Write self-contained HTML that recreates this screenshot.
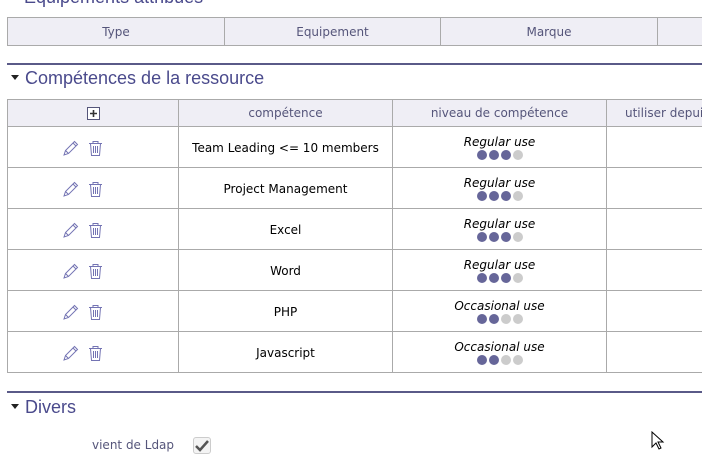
<!DOCTYPE html>
<html><head><meta charset="utf-8"><style>
*{margin:0;padding:0;box-sizing:border-box}
body{width:702px;height:468px;overflow:hidden;background:#fff;font-family:"DejaVu Sans",sans-serif;position:relative}
.a{position:absolute}
.title{font-size:18px;color:#4a4a8c;white-space:nowrap;font-family:"Liberation Sans",sans-serif}
.line{height:2px;background:#5a5a88;left:7px;width:695px}
.tri{display:inline-block;width:0;height:0;border-left:4px solid transparent;border-right:4px solid transparent;border-top:5px solid #222;vertical-align:middle;margin:0 6px 0 4px;position:relative;top:-2px}
table{border-collapse:collapse;position:absolute;table-layout:fixed}
td,th{border:1px solid #aaa;text-align:center;font-size:12px;font-weight:normal;padding:0}
th{background:#efeef5;color:#55557a}
td{color:#000;padding-top:2px}
.dots span{display:inline-block;width:10px;height:10px;border-radius:50%;background:#666699;margin:0 1px}
.dots span.e{background:#cccccc}
i{font-size:12px}
</style></head><body>
<div class="a title" style="left:24px;top:-13px">Equipements attribués</div>
<table style="left:7px;top:17px;width:720px">
<col style="width:217px"><col style="width:216px"><col style="width:217px"><col style="width:70px">
<tr style="height:28px"><th>Type</th><th>Equipement</th><th>Marque</th><th></th></tr></table>
<div class="a line" style="top:63px"></div>
<div class="a title" style="left:7px;top:68px"><span class="tri"></span>Compétences de la ressource</div>
<table style="left:7px;top:99px;width:760px">
<col style="width:171px"><col style="width:214px"><col style="width:214px"><col style="width:161px">
<tr style="height:27px"><th><svg width="13" height="13" viewBox="0 0 13 13" style="vertical-align:middle"><rect x="0.5" y="0.5" width="12" height="12" fill="#fff" stroke="#55557a"/><path d="M6.5 3v7M3 6.5h7" stroke="#333" stroke-width="1.6"/></svg></th><th>compétence</th><th>niveau de compétence</th><th style="text-align:left;padding-left:18px;white-space:nowrap;overflow:hidden">utiliser depuis</th></tr>
</table>
<div class="a line" style="top:391px"></div>
<div class="a title" style="left:7px;top:397px"><span class="tri"></span>Divers</div>
<div class="a" style="left:92px;top:438px;font-size:12px;color:#55557a">vient de Ldap</div>
<div class="a" style="left:193px;top:437px;width:18px;height:17px;border:1px solid #ccc;border-radius:3px;background:#f4f4f4"><svg width="16" height="15" viewBox="0 0 16 15"><path d="M2 8l4 4 8-9" fill="none" stroke="#555" stroke-width="2.5"/></svg></div>
<svg class="a" style="left:651px;top:431px" width="14" height="20" viewBox="0 0 14 20"><path d="M1 1v15l4-4 3 6 2-1-3-6h5z" fill="#fff" stroke="#000" stroke-width="1"/></svg>
<script>
var rows=[["Team Leading &lt;= 10 members","Regular use",3],["Project Management","Regular use",3],["Excel","Regular use",3],["Word","Regular use",3],["PHP","Occasional use",2],["Javascript","Occasional use",2]];
var ic='<svg width="16" height="16" viewBox="0 0 16 16" style="vertical-align:middle;margin-right:9px"><path d="M1 15l1.5-4.5 9-9 3 3-9 9z M2.5 10.5l3 3 M10 3l3 3" fill="none" stroke="#7373b3" stroke-width="1"/></svg><svg width="15" height="17" viewBox="0 0 15 17" style="vertical-align:middle"><path d="M1 3.5h13M5 3.5V1.5h5v2M2.5 3.5l1 12h8l1-12M5.5 6v7M7.5 6v7M9.5 6v7" fill="none" stroke="#7373b3" stroke-width="1"/></svg>';
var h='';rows.forEach(function(r){var d='';for(var i=0;i<4;i++)d+='<span'+(i<r[2]?'':' class="e"')+'></span>';
h+='<tr style="height:41px"><td style="padding-right:20px">'+ic+'</td><td>'+r[0]+'</td><td style="line-height:16px"><i>'+r[1]+'</i><div class="dots" style="line-height:11px">'+d+'</div></td><td></td></tr>';});
document.querySelectorAll('table')[1].insertAdjacentHTML('beforeend',h);
</script>
</body></html>
